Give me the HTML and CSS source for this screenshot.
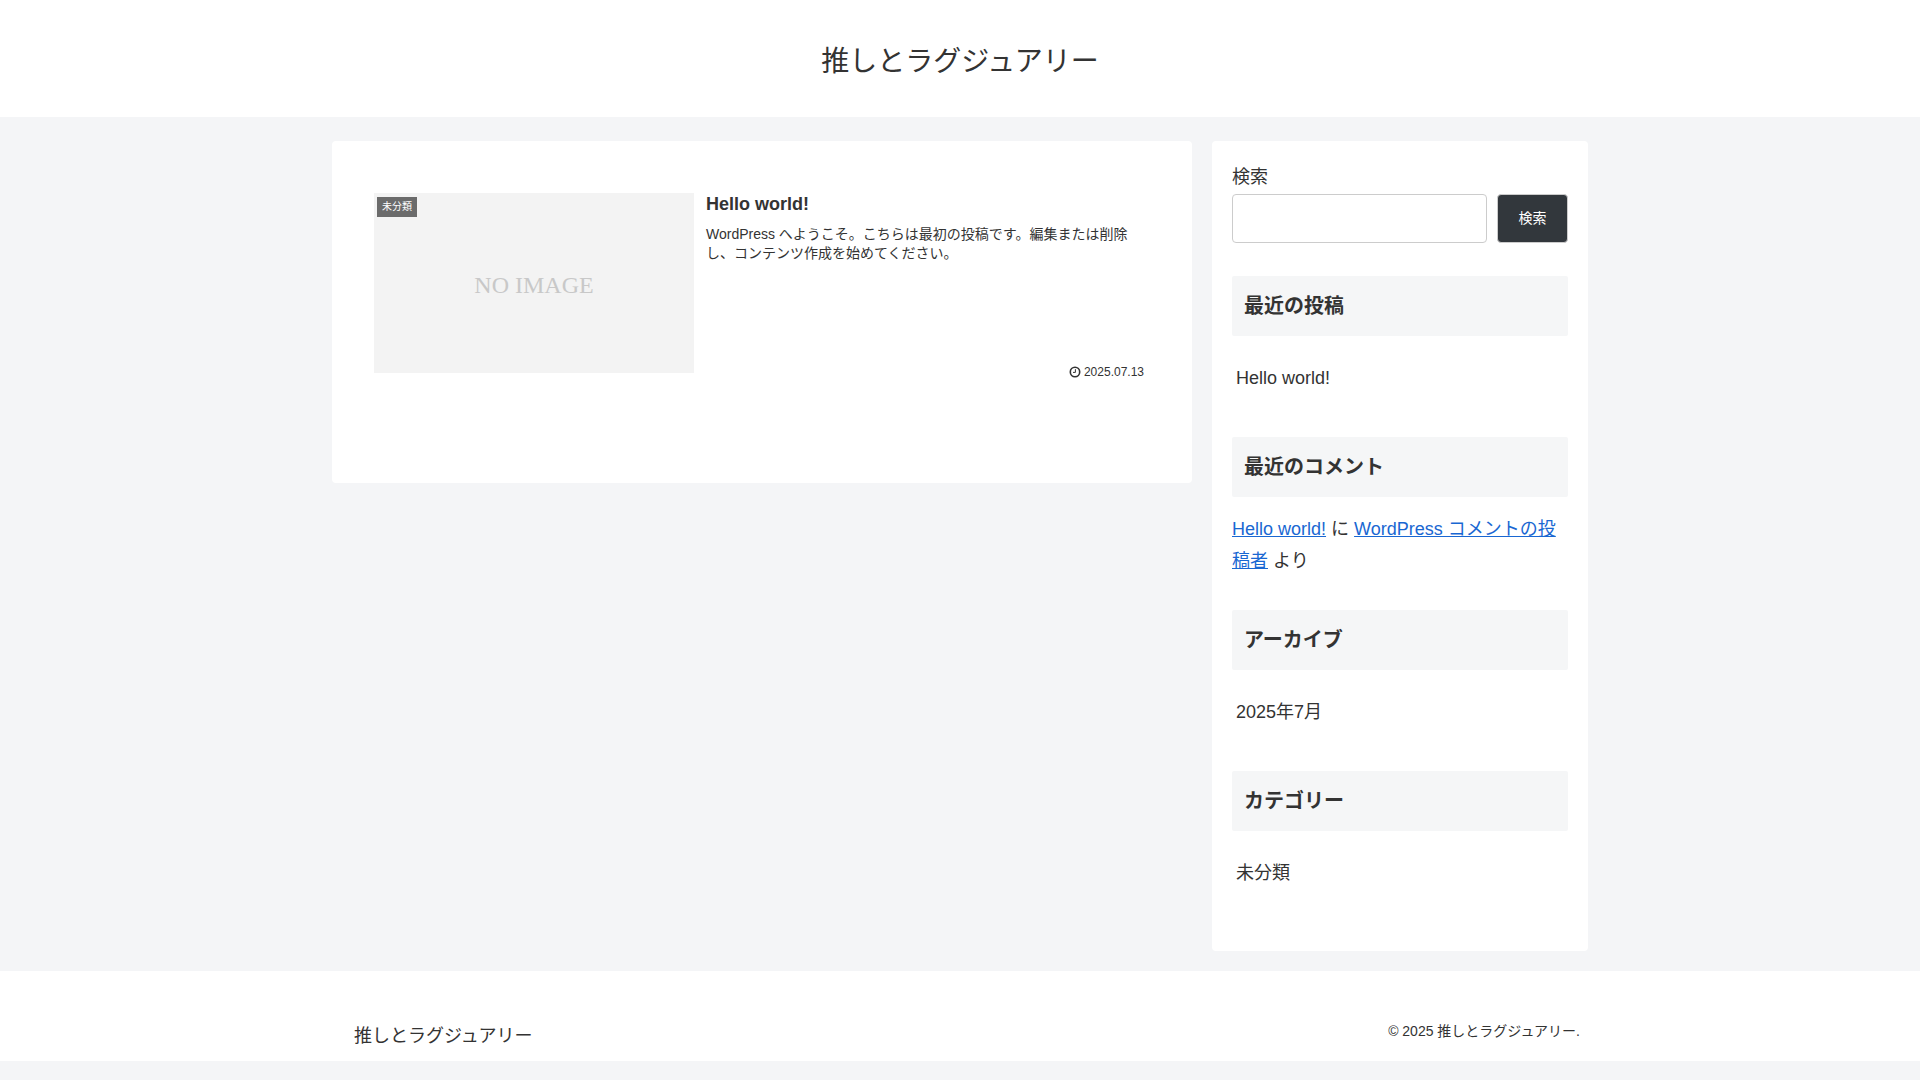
FILE: index.html
```html
<!DOCTYPE html>
<html lang="ja">
<head>
  <meta charset="UTF-8">
  <meta name="viewport" content="width=device-width, initial-scale=1">
  <title>推しとラグジュアリー</title>
  <link rel="stylesheet" href="styles.css">
</head>
<body>

  <header class="header">
    <h1 class="logo"><a href="#">推しとラグジュアリー</a></h1>
  </header>

  <div class="content wrap">
    <main class="main">
      <a class="entry-card" href="#">
        <div class="thumb">
          <span class="no-image">NO IMAGE</span>
          <span class="cat-label">未分類</span>
        </div>
        <div class="card-content">
          <h2 class="card-title">Hello world!</h2>
          <p class="snippet">WordPress へようこそ。こちらは最初の投稿です。編集または削除し、コンテンツ作成を始めてください。</p>
          <div class="post-date">
            <svg class="clock" viewBox="0 0 12 12" aria-hidden="true">
              <circle cx="6" cy="6" r="4.7" fill="none" stroke="currentColor" stroke-width="1.6"/>
              <path d="M6.4 3.2v3.2H4" fill="none" stroke="currentColor" stroke-width="1"/>
            </svg>
            <time datetime="2025-07-13">2025.07.13</time>
          </div>
        </div>
      </a>
    </main>

    <aside class="sidebar">
      <form class="widget search" onsubmit="return false">
        <label for="search-input">検索</label>
        <div class="search-row">
          <input type="search" id="search-input">
          <button type="submit">検索</button>
        </div>
      </form>

      <section class="widget">
        <h2 class="widget-title">最近の投稿</h2>
        <ul class="links">
          <li><a href="#">Hello world!</a></li>
        </ul>
      </section>

      <section class="widget">
        <h2 class="widget-title">最近のコメント</h2>
        <p class="comment"><a href="#">Hello world!</a> に <a href="#">WordPress コメントの投稿者</a> より</p>
      </section>

      <section class="widget">
        <h2 class="widget-title">アーカイブ</h2>
        <ul class="links">
          <li><a href="#">2025年7月</a></li>
        </ul>
      </section>

      <section class="widget">
        <h2 class="widget-title">カテゴリー</h2>
        <ul class="links">
          <li><a href="#">未分類</a></li>
        </ul>
      </section>
    </aside>
  </div>

  <footer class="footer">
    <div class="footer-in wrap">
      <a class="footer-logo" href="#">推しとラグジュアリー</a>
      <p class="copyright">© 2025 推しとラグジュアリー.</p>
    </div>
  </footer>

</body>
</html>
```
FILE: styles.css
```css
* { box-sizing: border-box; }
body {
  margin: 0;
  font-family: "Liberation Sans", "Noto Sans CJK JP", sans-serif;
  font-size: 18px;
  line-height: 32px;
  color: #333;
  background: #f4f5f7;
}
h1, h2, p, ul { margin: 0; padding: 0; }
ul { list-style: none; }
.wrap {
  max-width: 1256px;
  margin: 0 auto;
}

/* header */
.header {
  padding: 37px 0 30px;
  background: #fff;
  text-align: center;
}
.logo {
  font-size: 28px;
  font-weight: normal;
  line-height: 50px;
}
.logo a, .footer-logo {
  color: #333;
  text-decoration: none;
}

/* columns */
.content {
  display: flex;
  align-items: flex-start;
  gap: 20px;
  margin-top: 24px;
  margin-bottom: 20px;
}
.main {
  flex: 1;
  padding: 52px 42px 104px;
  background: #fff;
  border-radius: 4px;
}
.sidebar {
  width: 376px;
  padding: 20px 20px 19px;
  background: #fff;
  border-radius: 4px;
}

/* entry card */
.entry-card {
  display: flex;
  align-items: flex-start;
  gap: 12px;
  color: #333;
  text-decoration: none;
}
.thumb {
  position: relative;
  display: flex;
  align-items: center;
  justify-content: center;
  width: 320px;
  height: 180px;
  padding-top: 4px;
  background: #f3f3f3;
}
.no-image {
  font-family: "Liberation Serif", serif;
  font-size: 24px;
  color: #c8c8c8;
}
.cat-label {
  position: absolute;
  top: 4px;
  left: 3px;
  padding: 0 5px;
  font-size: 10px;
  line-height: 20px;
  color: #fff;
  background: #6b6b6b;
}
.card-content {
  flex: 1;
  display: flex;
  flex-direction: column;
  min-height: 186px;
  padding-right: 6px;
}
.card-title {
  margin-bottom: 10px;
  font-size: 18px;
  line-height: 22px;
}
.snippet {
  padding-right: 8px;
  font-size: 14px;
  line-height: 19px;
}
.post-date {
  display: flex;
  align-items: center;
  justify-content: flex-end;
  gap: 3px;
  margin-top: auto;
  font-size: 12px;
  line-height: 14px;
}
.clock {
  width: 12px;
  height: 12px;
}

/* sidebar widgets */
.widget { margin-bottom: 33px; }
.search label {
  display: block;
  line-height: 33px;
}
.search-row {
  display: flex;
  gap: 10px;
}
.search-row input {
  flex: 1;
  min-width: 0;
  height: 49px;
  padding: 10px;
  font-size: 18px;
  background: #fff;
  border: 1px solid #ccc;
  border-radius: 4px;
}
.search-row button {
  width: 71px;
  padding: 0 0 4px;
  font-family: inherit;
  font-size: 14px;
  color: #fff;
  background: #32373c;
  border: 1px solid #ccc;
  border-radius: 4px;
  cursor: pointer;
}
.widget-title {
  margin-bottom: 16px;
  padding: 12px;
  font-size: 20px;
  line-height: 36px;
  background: #f5f6f7;
  border-radius: 2px;
}
.links {
  padding: 10px 4px;
}
.links a {
  color: #333;
  text-decoration: none;
}
.comment a { color: #1967d2; }

/* footer */
.footer { background: #fff; }
.footer-in {
  display: flex;
  justify-content: space-between;
  padding: 44px 8px 4px 22px;
}
.footer-logo { line-height: 42px; }
.copyright {
  font-size: 14px;
}
```
